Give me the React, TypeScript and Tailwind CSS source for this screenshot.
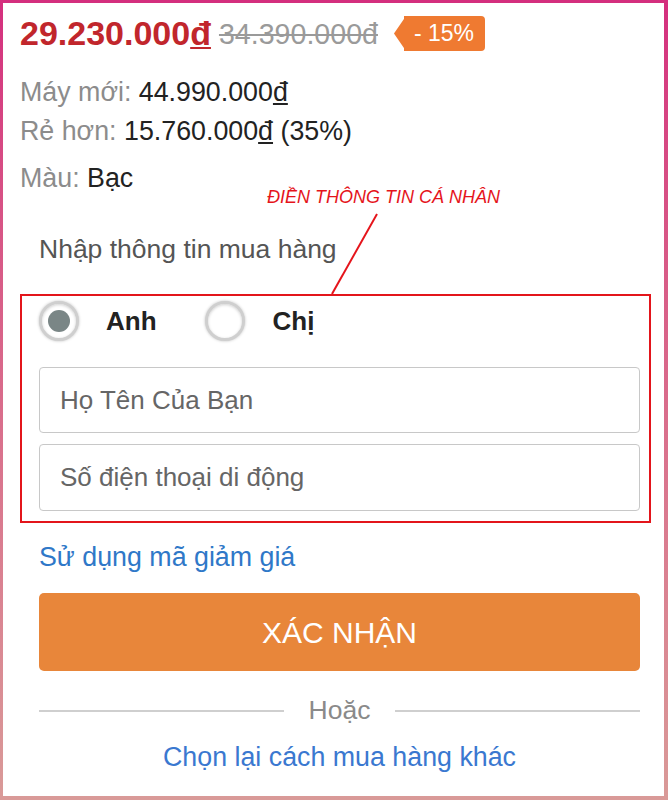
import React from "react";

function Radio({ checked }: { checked?: boolean }) {
  return (
    <div className="w-10 h-10 rounded-full bg-white border-[3px] border-[#cfcfcf] shadow-[0_0_3px_rgba(0,0,0,0.25),inset_0_1px_3px_rgba(0,0,0,0.18)] flex items-center justify-center shrink-0">
      {checked && <div className="w-[22px] h-[22px] rounded-full bg-[#7a8686]" />}
    </div>
  );
}

export default function App() {
  const font = { fontFamily: '"Liberation Sans", Arial, sans-serif' };
  return (
    <div
      className="w-[668px] h-[800px] bg-gradient-to-b from-[#d42e7e] to-[#d99a98] pt-[3px] pl-[3px] pr-[4px] pb-[4px]"
      style={font}
    >
      <div className="relative bg-white h-full pl-[17px] pr-[24px] flex flex-col">
        {/* price */}
        <div className="mt-[10px] h-[40px] flex items-center">
          <span className="text-[34px] font-bold text-[#c1262c]">
            29.230.000<span className="underline decoration-2 underline-offset-2">đ</span>
          </span>
          <span className="ml-[8px] mt-[2px] text-[28.6px] text-[#9a9a9a] line-through">34.390.000đ</span>
          <div className="ml-[16px] relative h-[35px] pl-[10px] flex items-center">
            <svg className="absolute left-0 top-0" width="14" height="35" viewBox="0 0 14 35">
              <path d="M14 0 L12 0 L0 17.5 L12 35 L14 35 Z" fill="#ef7a31" />
            </svg>
            <div className="relative h-[35px] bg-[#ef7a31] rounded-r-[4px] pl-[10px] pr-[11px] flex items-center text-white text-[23px]">
              - 15%
            </div>
          </div>
        </div>

        <div className="mt-[23px] text-[26.8px] leading-[32px] text-[#222]">
          <span className="text-[#8c8c8c]">Máy mới: </span>44.990.000<span className="underline underline-offset-2">đ</span>
        </div>
        <div className="mt-[7px] text-[26.8px] leading-[32px] text-[#222]">
          <span className="text-[#8c8c8c]">Rẻ hơn: </span>15.760.000<span className="underline underline-offset-2">đ</span> (35%)
        </div>
        <div className="mt-[15px] text-[26.8px] leading-[32px] text-[#222]">
          <span className="text-[#8c8c8c]">Màu: </span>Bạc
        </div>

        {/* form */}
        <div className="pl-[19px] flex flex-col">
          <div className="mt-[39px] text-[26.5px] leading-[32px] text-[#555]">Nhập thông tin mua hàng</div>

          <div className="mt-[29px] -ml-[19px] -mr-[11px] border-2 border-[#e3151b] pl-[17px] pr-[9px] pt-[5px] pb-[10px]">
            <div className="flex items-center h-10">
              <Radio checked />
              <span className="ml-[27px] text-[26px] font-bold text-[#222]">Anh</span>
              <div className="ml-[48px]">
                <Radio />
              </div>
              <span className="ml-[28px] text-[26px] font-bold text-[#222]">Chị</span>
            </div>
            <div className="mt-[26px] h-[66px] border border-[#c8c8c8] rounded-[4px] flex items-center pl-[20px] text-[26px] text-[#666]">
              Họ Tên Của Bạn
            </div>
            <div className="mt-[11px] h-[67px] border border-[#c8c8c8] rounded-[4px] flex items-center pl-[20px] text-[26px] text-[#666]">
              Số điện thoại di động
            </div>
          </div>

          <div className="mt-[18px] text-[26.8px] leading-[32px] text-[#2f78c8]">Sử dụng mã giảm giá</div>

          <div className="mt-[20px] h-[78px] bg-[#e8863a] rounded-[5px] flex items-center justify-center text-white text-[30px]">
            XÁC NHẬN
          </div>

          <div className="mt-[24px] h-[32px] flex items-center">
            <div className="flex-1 h-[2px] bg-[#cfcfcf]" />
            <span className="px-[25px] text-[26.5px] text-[#8a8a8a]">Hoặc</span>
            <div className="flex-1 h-[2px] bg-[#cfcfcf]" />
          </div>

          <div className="mt-[14px] text-center text-[26.8px] leading-[32px] text-[#3a78d0]">Chọn lại cách mua hàng khác</div>
        </div>

        {/* annotation */}
        <div className="absolute left-[264px] top-[181px] text-[18px] italic text-[#e5141b] whitespace-nowrap">
          ĐIỀN THÔNG TIN CÁ NHÂN
        </div>
        <svg className="absolute left-0 top-0 pointer-events-none" width="661" height="300">
          <line x1="374" y1="211" x2="329" y2="291" stroke="#e5141b" strokeWidth="2" />
        </svg>
      </div>
    </div>
  );
}
